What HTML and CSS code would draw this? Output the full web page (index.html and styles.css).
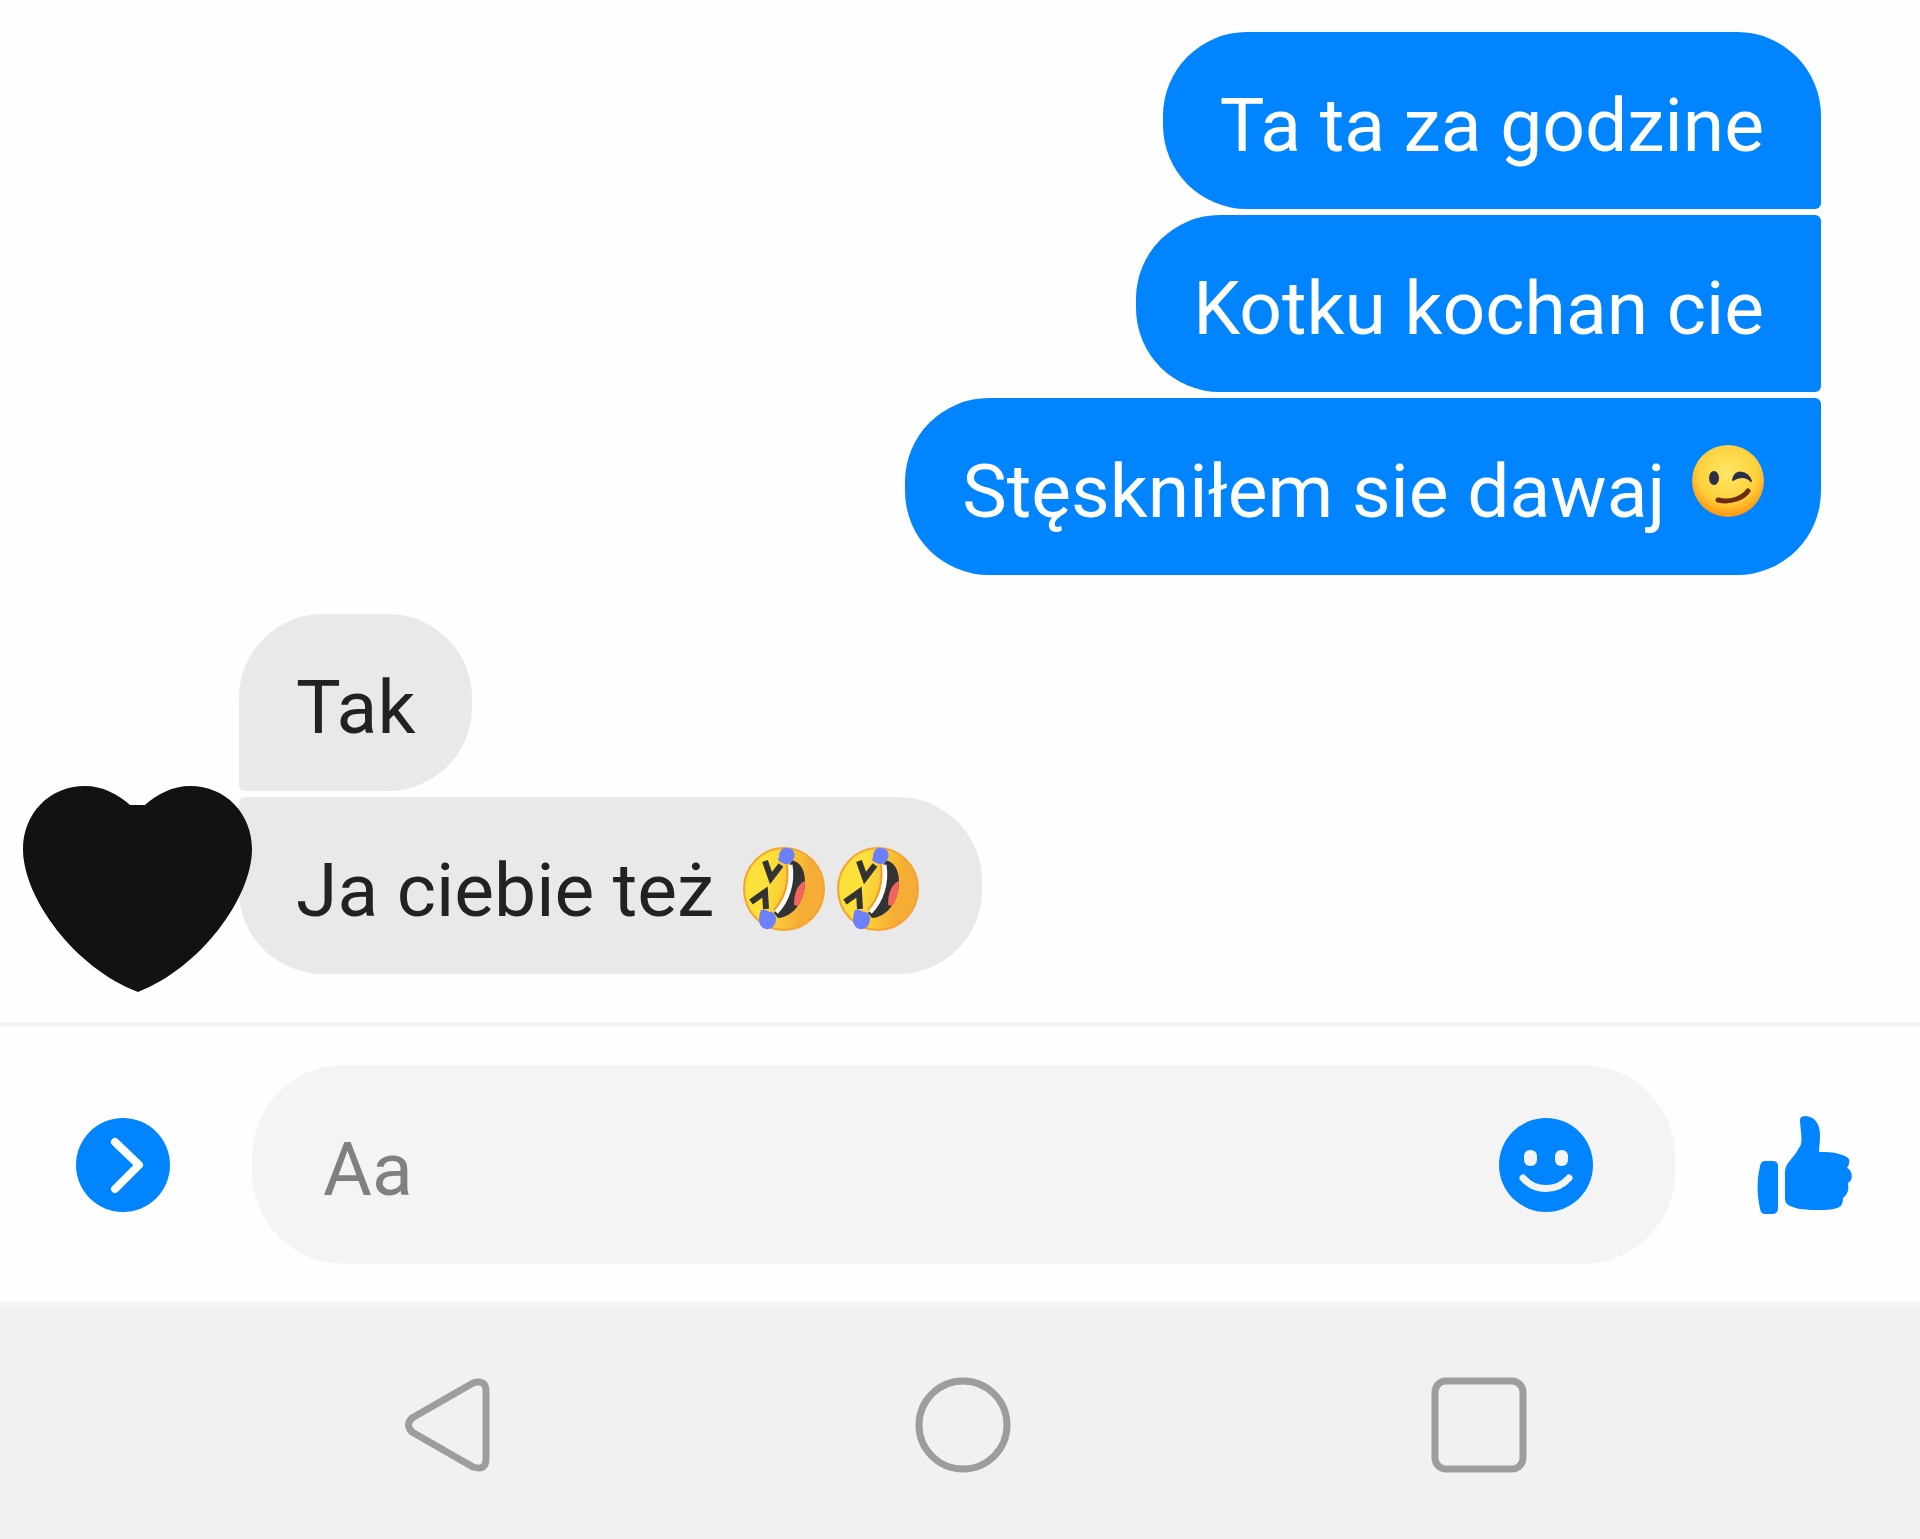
FILE: index.html
```html
<!DOCTYPE html>
<html lang="pl">
  <head>
    <meta charset="UTF-8" />
    <meta name="viewport" content="width=device-width, initial-scale=1.0" />
    <title>Chat</title>
    <link rel="stylesheet" href="styles.css" />
  </head>
  <body>
    <!-- shared emoji drawing -->
    <svg class="defs" width="0" height="0" aria-hidden="true">
      <defs>
        <radialGradient id="winkFill" cx="50%" cy="38%" r="64%">
          <stop offset="0" stop-color="#ffe766" />
          <stop offset="0.65" stop-color="#ffd03c" />
          <stop offset="1" stop-color="#ff8d0c" />
        </radialGradient>
        <linearGradient id="roflFill" x1="0" y1="0.4" x2="1" y2="0.6">
          <stop offset="0.3" stop-color="#fde03a" />
          <stop offset="0.75" stop-color="#f6ad35" />
        </linearGradient>
        <symbol id="rofl" viewBox="0 0 82 84">
          <ellipse cx="41" cy="42" rx="40" ry="41" fill="url(#roflFill)" stroke="#f3a431" stroke-width="2" />
          <path d="M47 13C58 14 62 24 62 35C62 53 51 70 35 71L31 66C43 52 49 30 47 13Z" fill="#333" />
          <path d="M62 34C55 37 51 45 51 58L55 59C60 52 62 43 62 34Z" fill="#f0655f" />
          <path d="M47 18C50 36 44 54 33 65" fill="none" stroke="#fff" stroke-width="5" />
          <path d="M44 18C46 36 41 52 31 63" fill="none" stroke="#f59b24" stroke-width="2" />
          <path d="M22 14L28 31L38 18M8 55L22 45L23 62" fill="none" stroke="#333" stroke-width="6" />
          <path d="M36 10C36 4 40 0 44 1C50 1 53 6 51 11C49 16 46 18 42 17C38 16 36 14 35 13Z" fill="#6c80fb" />
          <path d="M18 63C22 61 25 65 28 65C33 66 34 72 32 77C29 83 22 84 18 79C15 75 16 68 18 63Z" fill="#6c80fb" />
        </symbol>
      </defs>
    </svg>

    <main class="chat">
      <section class="group sent">
        <p class="bubble">Ta ta za godzine</p>
        <p class="bubble">Kotku kochan cie</p>
        <p class="bubble">
          Stęskniłem sie dawaj
          <svg class="wink" viewBox="0 0 72 72" role="img" aria-label="wink">
            <circle cx="36" cy="36" r="36" fill="url(#winkFill)" />
            <ellipse cx="22" cy="33" rx="5" ry="7" fill="#2b3048" />
            <path d="M41 35C43 25 55 25 59 36C54 31 47 31 41 35Z" fill="#2b3048" stroke="#2b3048" stroke-width="2" stroke-linejoin="round" />
            <path d="M26 55C39 58 51 53 56 46" fill="none" stroke="#6d2c12" stroke-width="5" stroke-linecap="round" />
          </svg>
        </p>
      </section>

      <section class="group received">
        <p class="bubble">Tak</p>
        <p class="bubble">
          Ja ciebie też
          <svg class="rofl" role="img" aria-label="rofl"><use href="#rofl" /></svg><svg class="rofl" role="img" aria-label="rofl"><use href="#rofl" /></svg>
        </p>
        <svg class="avatar" viewBox="0 0 229 206" aria-hidden="true">
          <path d="M107 19C95 8 79 0 62 0C26 0 0 28 0 63C0 112 52 182 115 206C177 182 229 112 229 63C229 28 203 0 167 0C150 0 134 8 122 19Z" fill="#121212" />
        </svg>
      </section>
    </main>

    <form class="composer">
      <button class="icon" type="button" aria-label="More">
        <svg viewBox="0 0 94 94">
          <circle cx="47" cy="47" r="47" fill="#0084ff" />
          <path d="M39 24L63 47L39 71" fill="none" stroke="#fff" stroke-width="8" stroke-linecap="round" stroke-linejoin="round" />
        </svg>
      </button>
      <div class="field">
        <input type="text" placeholder="Aa" aria-label="Message" />
        <button class="icon" type="button" aria-label="Emoji">
          <svg viewBox="0 0 94 94">
            <circle cx="47" cy="47" r="47" fill="#0084ff" />
            <rect x="25" y="32" width="13" height="16" rx="6" fill="#f4f4f4" />
            <rect x="56" y="32" width="13" height="16" rx="6" fill="#f4f4f4" />
            <path d="M24 60C36 74 58 74 70 60" fill="none" stroke="#f4f4f4" stroke-width="7" stroke-linecap="round" />
          </svg>
        </button>
      </div>
      <button class="icon like" type="button" aria-label="Like">
        <svg viewBox="0 0 96 100" fill="#0084ff">
          <path d="M8 46H16Q21 46 21 51V93Q21 99 15 99H8Q4 99 3 94Q-2 72 3 51Q4 46 8 46Z" />
          <path d="M43 5Q43 1 49 1C58 2 63 9 63 20C63 27 62 32 62 37C69 37 76 37 82 39C90 41 94 44 92 48C92 50 91 51 90 53C94 54 96 61 94 65C93 67 91 67 91 69C92 74 91 79 86 83C86 89 84 92 80 93C74 95 68 95 62 95C52 95 43 95 36 92Q28 90 28 84V57C28 48 37 43 42 33C47 28 43 14 43 5Z" />
        </svg>
      </button>
    </form>

    <nav class="navbar">
      <button class="icon" type="button" aria-label="Back">
        <svg viewBox="0 0 96 96">
          <path d="M74 6L13 41Q6 48 13 55L74 90Q87 94 87 82V14Q87 2 74 6Z" />
        </svg>
      </button>
      <button class="icon" type="button" aria-label="Home">
        <svg viewBox="0 0 96 96"><circle cx="48" cy="48" r="44" /></svg>
      </button>
      <button class="icon" type="button" aria-label="Recent apps">
        <svg viewBox="0 0 96 96"><rect x="4" y="4" width="88" height="88" rx="11" /></svg>
      </button>
    </nav>
  </body>
</html>
```

FILE: styles.css
```css
* {
  box-sizing: border-box;
  margin: 0;
  padding: 0;
}
body {
  min-height: 100vh;
  display: flex;
  flex-direction: column;
  background: #fefefe;
  font-family: Roboto, sans-serif;
  font-size: 75px;
}
.defs {
  position: absolute;
}
.chat {
  flex: 1;
  display: flex;
  flex-direction: column;
  gap: 39px;
  padding: 32px 99px 48px 239px;
}
.group {
  position: relative;
  display: flex;
  flex-direction: column;
  gap: 6px;
}
.sent {
  align-items: flex-end;
}
.received {
  align-items: flex-start;
}
.bubble {
  padding: 49px 57px 39px;
  line-height: 89px;
  border-radius: 84px;
}
.sent .bubble {
  background: #0084ff;
  color: #fff;
}
.received .bubble {
  background: #e9e9e9;
  color: #222;
}
.sent .bubble:not(:first-child) {
  border-top-right-radius: 6px;
}
.sent .bubble:not(:last-child) {
  border-bottom-right-radius: 6px;
}
.received .bubble:nth-child(1) {
  border-bottom-left-radius: 6px;
}
.received .bubble:nth-child(2) {
  border-top-left-radius: 6px;
}
.wink {
  width: 72px;
  height: 72px;
  margin: -8px 0 0 8px;
}
.rofl {
  width: 82px;
  height: 84px;
  margin: -8px 6px 0;
  vertical-align: -15px;
}
.rofl:first-child {
  margin-left: 10px;
}
/* the heart lies over the edge of the last bubble */
.avatar {
  position: absolute;
  left: -216px;
  bottom: -18px;
  width: 229px;
  height: 206px;
}
.icon {
  flex: none;
  width: 94px;
  border: none;
  background: none;
  cursor: pointer;
}
.icon svg {
  display: block;
  width: 100%;
}
.composer {
  display: flex;
  align-items: center;
  gap: 82px;
  padding: 38px 67px 38px 76px;
  border-top: 5px solid #f4f4f4;
}
.field {
  flex: 1;
  display: flex;
  align-items: center;
  padding: 0 82px 0 71px;
  background: #f4f4f4;
  border-radius: 92px;
}
.field input {
  flex: 1;
  min-width: 0;
  height: 199px;
  padding-top: 8px;
  border: none;
  outline: none;
  background: none;
  font: inherit;
}
.field input::placeholder {
  color: #808080;
}
.like {
  width: 96px;
}
.navbar {
  display: grid;
  grid-template-columns: repeat(3, 1fr);
  justify-items: center;
  padding: 71px 183px 66px 189px;
  background: #f1f1f1;
  border-top: 4px solid #f6f6f6;
}
.navbar .icon {
  width: 96px;
}
.navbar svg {
  fill: none;
  stroke: #9d9d9d;
  stroke-width: 7px;
}
```
